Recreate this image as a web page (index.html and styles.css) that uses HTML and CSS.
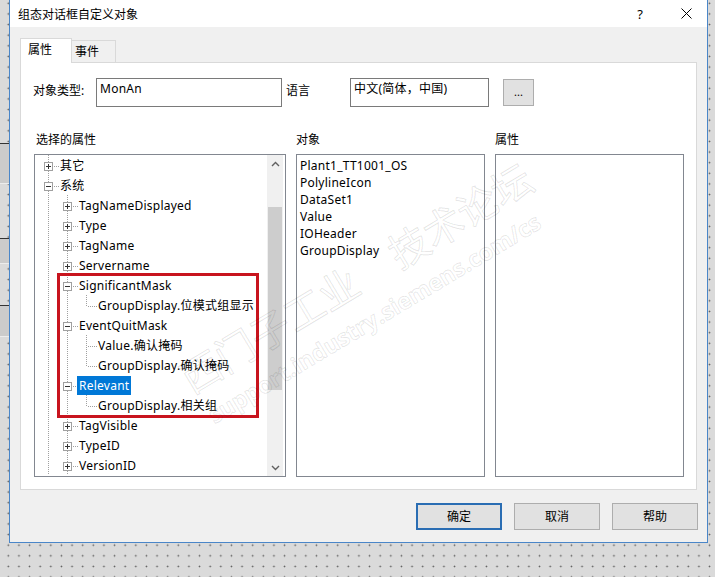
FILE: index.html
```html
<!DOCTYPE html>
<html lang="zh-CN">
<head>
<meta charset="utf-8">
<title>组态对话框自定义对象</title>
<link rel="stylesheet" href="styles.css">
</head>
<body>
<div class="page">
<div class="strip">
  <div class="blk blk-a"></div>
  <div class="blk blk-b"></div>
  <div class="blk blk-c"></div>
</div>
<div class="dialog">
  <div class="titlebar">
    <span class="title">组态对话框自定义对象</span>
    <span class="help">?</span>
    <span class="close"><svg width="11" height="11" viewBox="0 0 11 11"><path d="M0.5 0.5 L10.5 10.5 M10.5 0.5 L0.5 10.5" stroke="#000" stroke-width="1" fill="none"/></svg></span>
  </div>
  <div class="body">
    <div class="tabs">
      <div class="tab active">属性</div>
      <div class="tab">事件</div>
    </div>
    <div class="panel">
      <div class="row1">
        <span class="lbl lbl1">对象类型:</span>
        <div class="input in1">MonAn</div>
        <span class="lbl lbl2">语言</span>
        <div class="input in2">中文(简体，中国)</div>
        <div class="dots-btn">...</div>
      </div>
      <div class="cols">
        <div class="col">
          <div class="col-label tree-label">选择的属性</div>
          <div class="box treebox">
            <div class="tree">
              <div class="r"><span class="c e"><span class="bx plus"></span></span><span class="tx">其它</span></div>
              <div class="r"><span class="c e"><span class="bx minus"></span></span><span class="tx">系统</span></div>
              <div class="r"><span class="c v"></span><span class="c e"><span class="bx plus"></span></span><span class="tx">TagNameDisplayed</span></div>
              <div class="r"><span class="c v"></span><span class="c e"><span class="bx plus"></span></span><span class="tx">Type</span></div>
              <div class="r"><span class="c v"></span><span class="c e"><span class="bx plus"></span></span><span class="tx">TagName</span></div>
              <div class="r"><span class="c v"></span><span class="c e"><span class="bx plus"></span></span><span class="tx">Servername</span></div>
              <div class="r"><span class="c v"></span><span class="c e"><span class="bx minus"></span></span><span class="tx">SignificantMask</span></div>
              <div class="r"><span class="c v"></span><span class="c v"></span><span class="c t"></span><span class="tx">GroupDisplay.位模式组显示</span></div>
              <div class="r"><span class="c v"></span><span class="c e"><span class="bx minus"></span></span><span class="tx">EventQuitMask</span></div>
              <div class="r"><span class="c v"></span><span class="c v"></span><span class="c f"></span><span class="tx">Value.确认掩码</span></div>
              <div class="r"><span class="c v"></span><span class="c v"></span><span class="c t"></span><span class="tx">GroupDisplay.确认掩码</span></div>
              <div class="r"><span class="c v"></span><span class="c e"><span class="bx minus"></span></span><span class="tx sel">Relevant</span></div>
              <div class="r"><span class="c v"></span><span class="c v"></span><span class="c t"></span><span class="tx">GroupDisplay.相关组</span></div>
              <div class="r"><span class="c v"></span><span class="c e"><span class="bx plus"></span></span><span class="tx">TagVisible</span></div>
              <div class="r"><span class="c v"></span><span class="c e"><span class="bx plus"></span></span><span class="tx">TypeID</span></div>
              <div class="r"><span class="c v"></span><span class="c e"><span class="bx plus"></span></span><span class="tx">VersionID</span></div>
            </div>
            <div class="scroll">
              <div class="sb-btn"><svg width="9" height="6" viewBox="0 0 9 6"><path d="M1 5 L4.5 1.5 L8 5" stroke="#606060" stroke-width="1.4" fill="none"/></svg></div>
              <div class="sb-gap"></div>
              <div class="sb-thumb"></div>
              <div class="sb-rest"></div>
              <div class="sb-btn"><svg width="9" height="6" viewBox="0 0 9 6"><path d="M1 1 L4.5 4.5 L8 1" stroke="#606060" stroke-width="1.4" fill="none"/></svg></div>
            </div>
            <div class="mark"></div>
          </div>
        </div>
        <div class="col">
          <div class="col-label">对象</div>
          <div class="box listbox">
            <div class="li">Plant1_TT1001_OS</div>
            <div class="li">PolylineIcon</div>
            <div class="li">DataSet1</div>
            <div class="li">Value</div>
            <div class="li">IOHeader</div>
            <div class="li">GroupDisplay</div>
          </div>
        </div>
        <div class="col">
          <div class="col-label">属性</div>
          <div class="box listbox"></div>
        </div>
      </div>
    </div>
    <div class="buttons">
      <div class="btn def">确定</div>
      <div class="btn">取消</div>
      <div class="btn">帮助</div>
    </div>
  </div>
  <div class="watermark">
    <div class="wm1">西门子工业<span class="wm-gap"></span>技术论坛</div>
    <div class="wm2">support.industry.siemens.com/cs</div>
  </div>
</div>
</div>
</body>
</html>
```
FILE: styles.css
```css
* { box-sizing: border-box; }
html, body { margin: 0; padding: 0; }
body {
  width: 715px;
  height: 577px;
  overflow: hidden;
  background-color: #dadada;
  background-image: radial-gradient(circle, #5a5a5a 0.7px, transparent 1.1px);
  background-size: 10.64px 10.64px;
  background-position: 3px -2px;
  font-family: "Noto Sans", "Noto Sans CJK SC", sans-serif;
  font-size: 12px;
  color: #000;
}
.page { display: flex; align-items: flex-start; }
.strip { width: 9px; flex: none; display: flex; flex-direction: column; }
.blk {
  background: #cbcbcb;
  border-top: 1px solid #333;
  border-bottom: 1px solid #ececec;
}
.blk-a { margin-top: 143px; height: 41px; }
.blk-b { margin-top: 54px; height: 26px; }
.blk-c { margin-top: 41px; height: 32px; }
.dialog {
  position: relative;
  flex: none;
  width: 699px;
  height: 543px;
  border: 1px solid #4a86c8;
  border-top: none;
  background: #f0f0f0;
  overflow: hidden;
}
.titlebar {
  height: 27px;
  background: #fff;
  display: flex;
  align-items: center;
  padding-left: 8px;
}
.title { flex: 1; }
.help { width: 50px; text-align: center; font-size: 13px; }
.close { width: 42px; display: flex; justify-content: center; align-items: center; }
.close svg { display: block; }
.body { padding: 11px 10px 0 10px; }
.tabs { display: flex; align-items: flex-end; height: 24px; }
.tab {
  height: 22px;
  width: 44px;
  border: 1px solid #d9d9d9;
  border-left: none;
  border-bottom: none;
  padding-left: 3px;
  line-height: 21px;
  background: #f0f0f0;
}
.tab.active {
  position: relative;
  z-index: 1;
  height: 25px;
  width: 52px;
  margin-bottom: -1px;
  border-left: 1px solid #d9d9d9;
  background: #fff;
  padding-left: 7px;
  line-height: 22px;
}
.panel {
  height: 428px;
  border: 1px solid #d9d9d9;
  background: #fff;
  padding: 15px 0 0 12px;
}
.row1 { display: flex; align-items: flex-start; height: 29px; }
.lbl { line-height: 25px; }
.lbl1 { width: 63px; }
.lbl2 { width: 68px; padding-left: 4px; }
.input {
  height: 29px;
  border: 1px solid #7a7a7a;
  padding: 1px 3px 0 3px;
  line-height: 18px;
  letter-spacing: 0.25px;
}
.in1 { width: 186px; }
.in2 { width: 139px; }
.dots-btn {
  margin-left: 14px;
  margin-top: 1px;
  width: 31px;
  height: 27px;
  background: #e1e1e1;
  border: 1px solid #adadad;
  text-align: center;
  line-height: 24px;
  font-size: 11px;
}
.cols { display: flex; gap: 10px; margin-top: 25px; margin-left: 1px; }
.col-label { height: 16px; line-height: 16px; margin-bottom: 6px; }
.tree-label { padding-left: 2px; }
.box {
  height: 323px;
  width: 189px;
  border: 1px solid #828790;
  background: #fff;
}
.treebox { width: 252px; display: flex; position: relative; }
.tree { flex: 1; padding-left: 5px; overflow: hidden; }
.r { display: flex; height: 20px; align-items: center; }
.c { flex: none; width: 19px; height: 20px; display: flex; align-items: flex-start; }
.c.v {
  background: repeating-linear-gradient(to bottom, #a0a0a0 0 1px, transparent 1px 2px) 8px 0 / 1px 20px no-repeat;
}
.c.e {
  background:
    repeating-linear-gradient(to bottom, #a0a0a0 0 1px, transparent 1px 2px) 8px 0 / 1px 20px no-repeat,
    repeating-linear-gradient(to right, #a0a0a0 0 1px, transparent 1px 2px) 14px 11px / 5px 1px no-repeat;
}
.c.f {
  background:
    repeating-linear-gradient(to bottom, #a0a0a0 0 1px, transparent 1px 2px) 8px 0 / 1px 20px no-repeat,
    repeating-linear-gradient(to right, #a0a0a0 0 1px, transparent 1px 2px) 10px 11px / 9px 1px no-repeat;
}
.c.t {
  background:
    repeating-linear-gradient(to bottom, #a0a0a0 0 1px, transparent 1px 2px) 8px 0 / 1px 11px no-repeat,
    repeating-linear-gradient(to right, #a0a0a0 0 1px, transparent 1px 2px) 10px 11px / 9px 1px no-repeat;
}
.bx {
  width: 9px;
  height: 9px;
  margin-left: 4px;
  margin-top: 7px;
  border: 1px solid #a0a0a0;
  background: #fff;
}
.bx.minus {
  background: linear-gradient(#333, #333) center / 5px 1px no-repeat, #fff;
}
.bx.plus {
  background:
    linear-gradient(#333, #333) center / 5px 1px no-repeat,
    linear-gradient(#333, #333) center / 1px 5px no-repeat,
    #fff;
}
.tx {
  padding: 0 2px;
  margin-left: -1px;
  line-height: 19px;
  white-space: nowrap;
  letter-spacing: 0.25px;
}
.tx.sel { background: #0078d7; color: #fff; }
.scroll {
  flex: none;
  width: 16px;
  margin-right: 2px;
  background: #f0f0f0;
  display: flex;
  flex-direction: column;
}
.sb-btn { height: 17px; display: flex; align-items: center; justify-content: center; }
.sb-btn svg { display: block; }
.sb-gap { height: 35px; }
.sb-thumb { height: 183px; margin: 0 1px; background: #cdcdcd; }
.sb-rest { flex: 1; }
.mark {
  position: absolute;
  left: 22px;
  top: 118px;
  width: 202px;
  height: 145px;
  border: 3px solid #c8141e;
}
.listbox { padding: 2px 0 0 3px; }
.li { line-height: 17px; letter-spacing: 0.25px; white-space: nowrap; }
.buttons {
  display: flex;
  justify-content: flex-end;
  gap: 12px;
  margin-top: 13px;
  margin-right: -1px;
}
.btn {
  width: 86px;
  height: 27px;
  background: #e1e1e1;
  border: 1px solid #adadad;
  text-align: center;
  line-height: 25px;
}
.btn.def { border: 2px solid #2a6db3; line-height: 23px; }
.watermark {
  position: absolute;
  left: 163px;
  top: 363px;
  transform-origin: 0 0;
  transform: rotate(-31deg);
  pointer-events: none;
  white-space: nowrap;
  color: transparent;
}
.wm1 {
  font-size: 40px;
  line-height: 40px;
  -webkit-text-stroke: 1px rgba(0, 0, 0, 0.11);
  font-family: "Noto Sans CJK SC", sans-serif;
}
.wm-gap { display: inline-block; width: 42px; }
.wm2 {
  margin-top: 12px;
  padding-left: 4px;
  font-size: 23px;
  line-height: 26px;
  font-weight: bold;
  -webkit-text-stroke: 1px rgba(0, 0, 0, 0.1);
  font-family: "Open Sans", sans-serif;
}
```
